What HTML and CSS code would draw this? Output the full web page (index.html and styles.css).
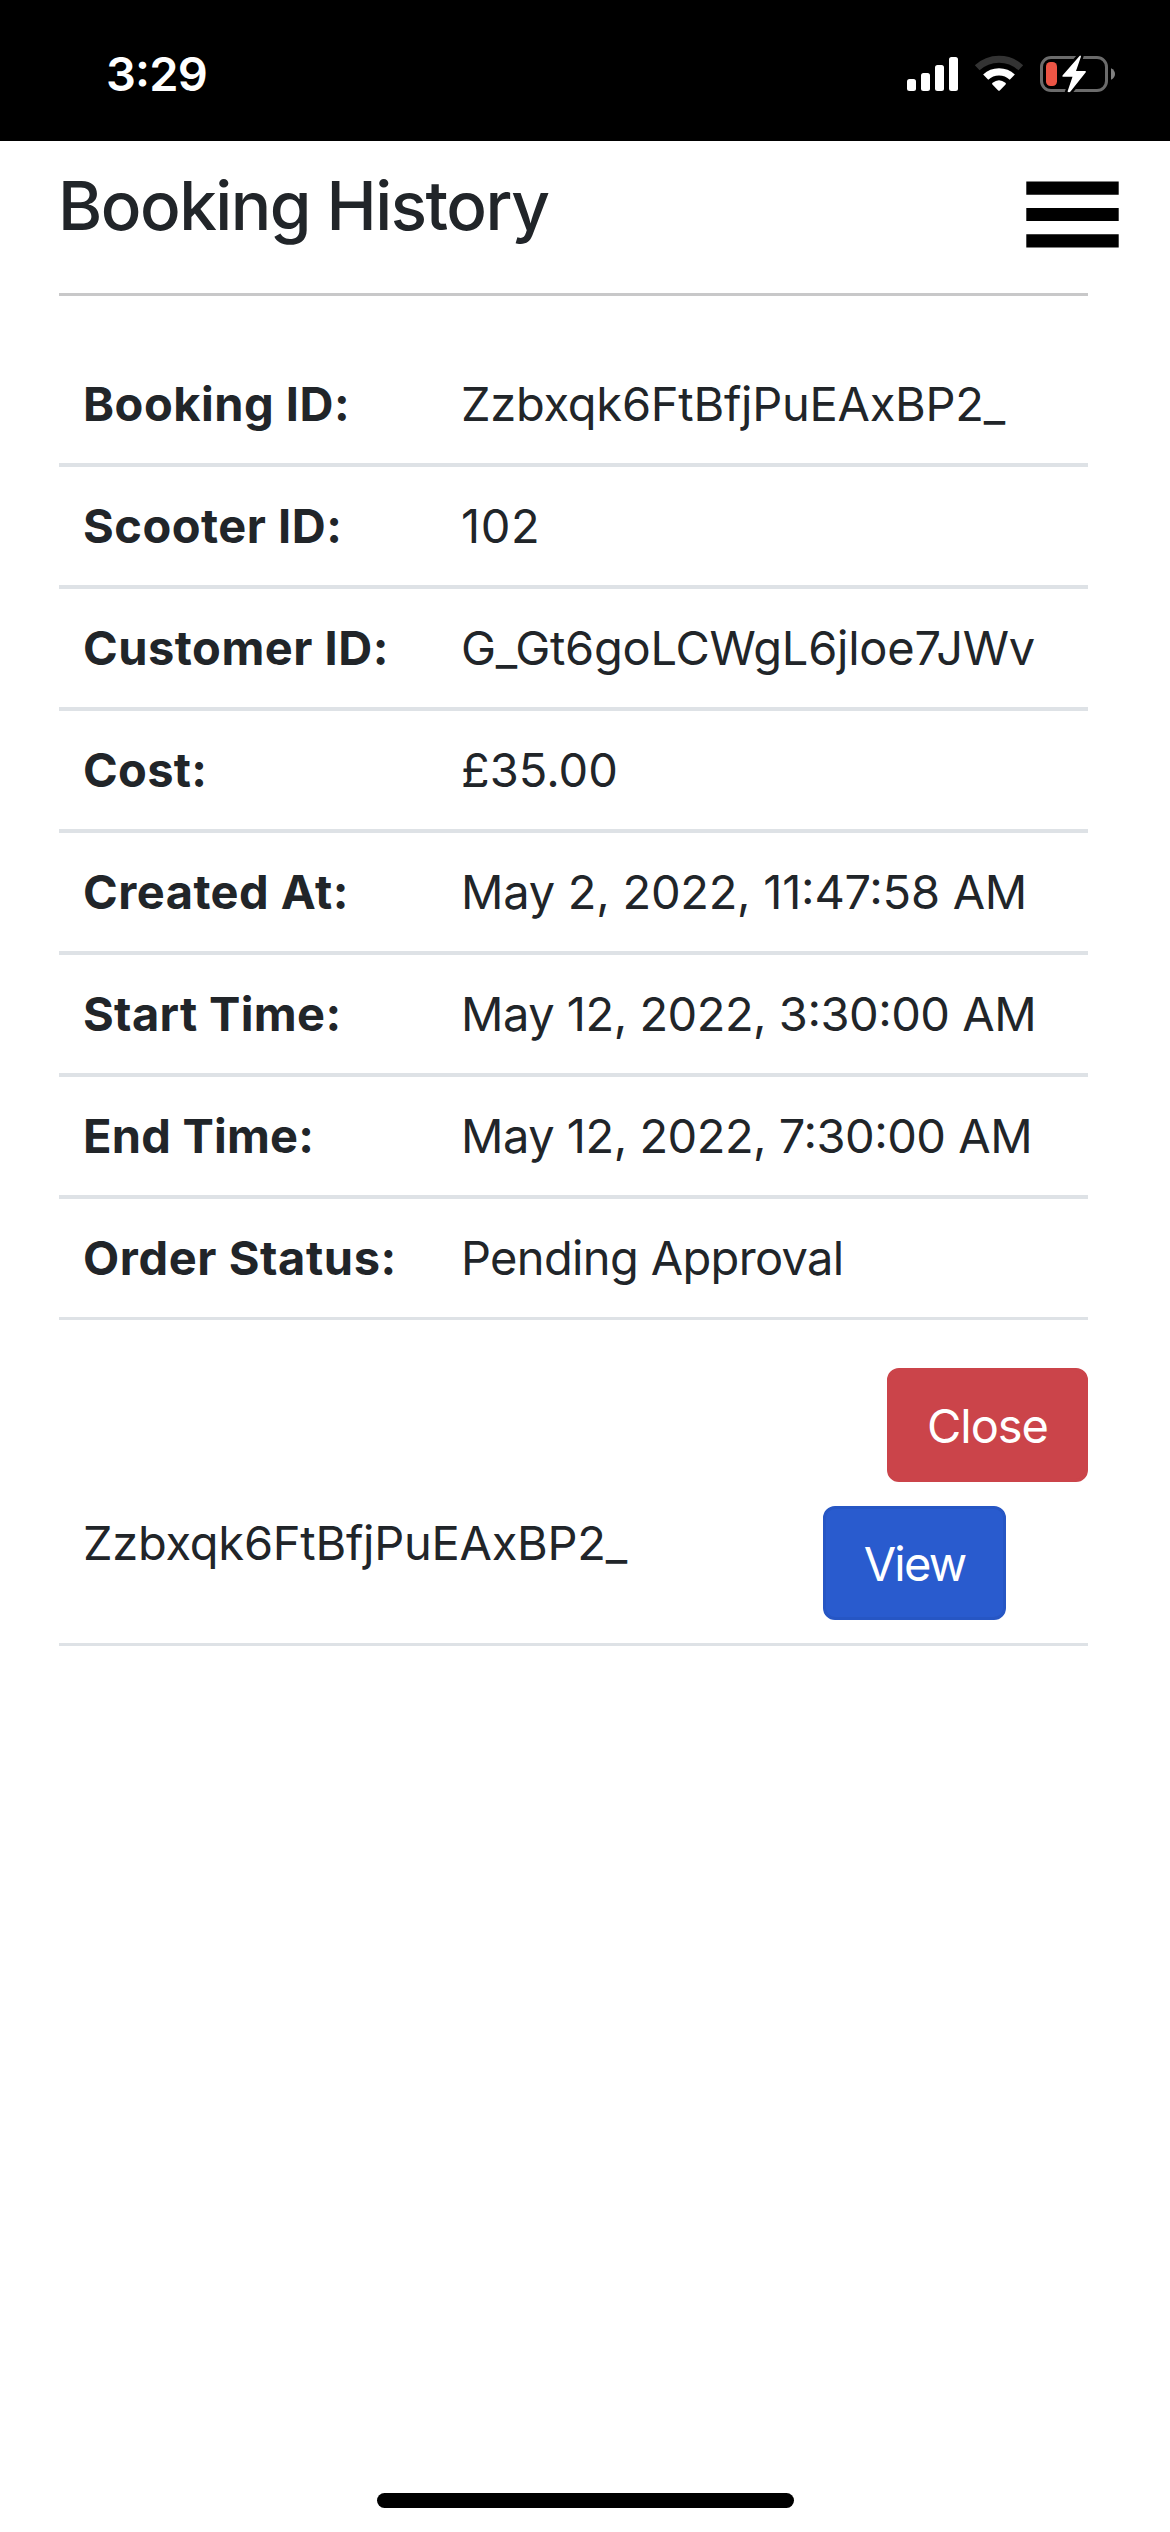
FILE: index.html
```html
<!DOCTYPE html>
<html lang="en">
<head>
<meta charset="utf-8">
<title>Booking History</title>
<link rel="stylesheet" href="styles.css">
</head>
<body>
<div class="status">
  <span class="clock">3:29</span>
  <svg class="status-icons" width="208" height="40" viewBox="907 54 208 40" aria-hidden="true">
    <g fill="#fff">
      <rect x="907" y="79" width="9" height="12" rx="2.5"/>
      <rect x="921" y="73" width="9" height="18" rx="2.5"/>
      <rect x="935" y="65" width="9" height="26" rx="2.5"/>
      <rect x="949" y="57" width="9" height="34" rx="2.5"/>
    </g>
    <path d="M977.2 67.8A32 32 0 0 1 1020.8 67.8" fill="none" stroke="#333" stroke-width="7"/>
    <path d="M985.7 77.2A19.2 19.2 0 0 1 1012.3 77.2" fill="none" stroke="#fff" stroke-width="7.4"/>
    <path d="M998.2 90.4L992.4 84.6Q991.6 83.6 992.6 82.8Q999 77.6 1005.4 82.8Q1006.4 83.6 1005.6 84.6L999.8 90.4Q999 91.2 998.2 90.4Z" fill="#fff"/>
    <rect x="1041.5" y="57.5" width="65" height="33" rx="9.5" fill="none" stroke="#6b6b6b" stroke-width="3"/>
    <rect x="1046" y="62" width="11" height="24" rx="4.5" fill="#ec5545"/>
    <path d="M1111 68.2Q1115 70.2 1115 74Q1115 77.8 1111 79.8Z" fill="#808080"/>
    <path d="M1079.5 56L1062.5 75.5Q1061.8 76.8 1063.2 76.8H1072.5L1067.5 91.5Q1069 93 1070.5 91.5L1085.8 72.3Q1086.3 71 1085 71H1076L1081 56.5Q1080.5 55 1079.5 56Z" fill="#fff" stroke="#000" stroke-width="5" paint-order="stroke"/>
  </svg>
</div>
<header class="header">
  <h1 class="title">Booking History</h1>
  <svg class="menu" width="93" height="67" viewBox="0 0 93 67" aria-label="Menu">
    <path d="M.3 .5H92.7V13.7H.3ZM.3 26.9H92.7V40.1H.3ZM.3 53.2H92.7V66.5H.3Z" fill="#000"/>
  </svg>
</header>
<main class="content">
  <div class="details">
    <div class="row"><b class="label k1">Booking ID:</b><span class="value v1">Zzbxqk6FtBfjPuEAxBP2_</span></div>
    <div class="row"><b class="label k2">Scooter ID:</b><span class="value v2">102</span></div>
    <div class="row"><b class="label k1">Customer ID:</b><span class="value v1">G_Gt6goLCWgL6jloe7JWv</span></div>
    <div class="row"><b class="label k3">Cost:</b><span class="value v3">£35.00</span></div>
    <div class="row"><b class="label k4">Created At:</b><span class="value v4">May 2, 2022, 11:47:58 AM</span></div>
    <div class="row"><b class="label k5">Start Time:</b><span class="value v5">May 12, 2022, 3:30:00 AM</span></div>
    <div class="row"><b class="label k6">End Time:</b><span class="value v5">May 12, 2022, 7:30:00 AM</span></div>
    <div class="row"><b class="label k7">Order Status:</b><span class="value v6">Pending Approval</span></div>
  </div>
  <div class="actions"><button class="btn close">Close</button></div>
  <div class="booking"><span class="booking-id">Zzbxqk6FtBfjPuEAxBP2_</span><button class="btn view">View</button></div>
</main>
<div class="home"></div>
</body>
</html>
```
FILE: styles.css
```css
* { box-sizing: border-box; }
body {
  margin: 0;
  height: 2532px;
  display: flex;
  flex-direction: column;
  background: #fff;
  color: #212529;
  font: 400 47px/72px Inter, "Liberation Sans", sans-serif;
  font-feature-settings: "calt" 1;
  white-space: nowrap;
  overflow: hidden;
}
.status {
  height: 141px;
  flex: none;
  display: flex;
  justify-content: space-between;
  align-items: flex-start;
  padding: 38px 55px 0 106px;
  background: #000;
  color: #fff;
}
.clock { font-weight: 600; letter-spacing: -.8px; }
.status-icons { margin-top: 16px; }
.header {
  height: 152px;
  flex: none;
  display: flex;
  justify-content: space-between;
  align-items: flex-start;
  padding: 0 51px 0 58px;
}
.title {
  margin: 24px 0 0;
  font-size: 67.4px;
  line-height: 81px;
  font-weight: 500;
  letter-spacing: -1.5px;
}
.menu { margin-top: 40px; }
.content {
  margin: 0 82px 0 59px;
  border-top: 3px solid #c8c8c9;
  padding-top: 49px;
}
.row {
  display: grid;
  grid-template-columns: 378px 1fr;
  align-items: center;
  height: 122px;
  padding-left: 24px;
  border-bottom: 4px solid #dee2e6;
}
.row:last-child { height: 121px; border-bottom-width: 3px; }
.label { font-weight: 700; font-feature-settings: "calt" 0; }
.k1 { letter-spacing: .5px; }
.k2 { letter-spacing: .5px; }
.k3 { letter-spacing: .3px; }
.k4 { letter-spacing: .47px; }
.k5 { letter-spacing: .35px; }
.k6 { letter-spacing: .22px; }
.k7 { letter-spacing: .6px; }
.v1, .booking-id { letter-spacing: -.25px; font-feature-settings: "calt" 0; }
.v2 { letter-spacing: .67px; }
.v3 { letter-spacing: .03px; }
.v4 { letter-spacing: -.25px; }
.v5 { letter-spacing: -.49px; }
.v6 { letter-spacing: -.66px; }
.actions {
  display: flex;
  justify-content: flex-end;
  margin-top: 48px;
}
.btn {
  height: 114px;
  padding: 2px 0 0;
  border: 3px solid;
  border-radius: 12px;
  color: #fff;
  font: inherit;
}
.close {
  width: 201px;
  background: #cb444a;
  border-color: #cb444a;
  letter-spacing: -1.03px;
}
.view {
  width: 183px;
  background: #295bce;
  border-color: #2656c4;
  letter-spacing: -1.79px;
}
.booking {
  display: flex;
  justify-content: space-between;
  align-items: flex-start;
  height: 164px;
  padding: 24px 82px 0 24px;
  border-bottom: 3px solid #dee2e6;
}
.booking-id { margin-top: 1px; }
.home {
  width: 417px;
  height: 15px;
  flex: none;
  margin: auto auto 24px 377px;
  border-radius: 8px;
  background: #000;
}
```
